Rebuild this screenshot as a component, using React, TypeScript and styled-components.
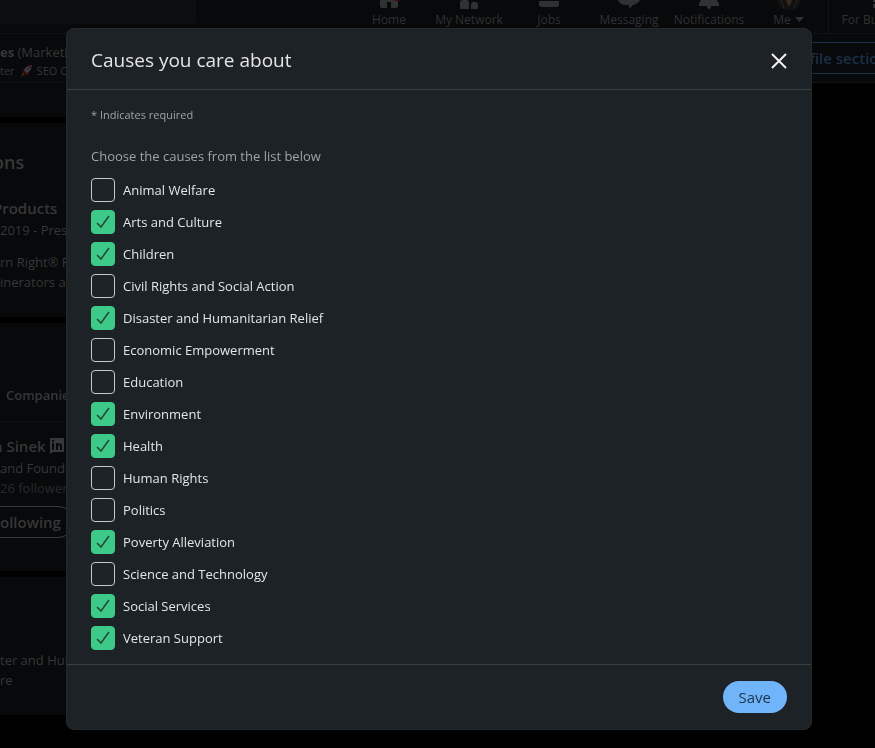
import React, { useState } from "react";
import styled, { createGlobalStyle } from "styled-components";

const Global = createGlobalStyle`
  * { box-sizing: border-box; }
  html { background: #000; overflow: hidden; }
  body { margin: 0; font-family: "Open Sans", "Noto Sans", sans-serif; color: #363738; }
  h1, h2, h3, p, ul, fieldset { margin: 0; padding: 0; border: 0; }
  svg { display: block; }
`;

const Page = styled.div`
  min-height: 100vh;
  background: #000;
`;

const Nav = styled.nav`
  display: flex;
  height: 34px;
  overflow: hidden;
  background: #07090a;
  border-bottom: 1px solid #101214;
`;

const SearchInput = styled.input`
  flex: 0 0 196px;
  height: 24px;
  margin-right: 153px;
  border: 0;
  border-radius: 0 0 4px 4px;
  background: #0b0f12;
  color: #363738;
`;

const NavLink = styled.a<{ $divided?: boolean }>`
  flex: 0 0 80px;
  display: flex;
  flex-direction: column;
  align-items: center;
  color: #303132;
  font-size: 12px;
  line-height: 16px;
  white-space: nowrap;
  text-decoration: none;
  border-right: ${(p) => (p.$divided ? "1px solid #101214" : "0")};
  svg { margin-bottom: 2px; }
`;

const BusinessLink = styled(NavLink)`
  flex-basis: 96px;
`;

const NavLabel = styled.span`
  display: flex;
  align-items: center;
  gap: 4px;
`;

const ProfileBar = styled.header`
  display: flex;
  justify-content: space-between;
  align-items: center;
  height: 49px;
  overflow: hidden;
  background: #07090a;
  border-bottom: 1px solid #101214;
`;

const ProfileSummary = styled.div`
  padding-top: 6px;
`;

const ProfileName = styled.p`
  font-size: 13px;
  line-height: 20px;
  white-space: nowrap;
`;

const Headline = styled.p`
  display: flex;
  align-items: center;
  gap: 5px;
  font-size: 11px;
  line-height: 18px;
  white-space: nowrap;
`;

const SectionButton = styled.button`
  flex: 0 0 auto;
  height: 32px;
  margin-right: -30px;
  padding: 0 16px;
  border: 1px solid #1b2f45;
  border-radius: 16px;
  background: transparent;
  color: #1b2f45;
  font: 600 15px "Open Sans", sans-serif;
`;

const Column = styled.main`
  display: grid;
  gap: 6px;
  width: 80%;
`;

const Card = styled.section<{ $height: number; $top?: number }>`
  min-height: ${(p) => p.$height}px;
  padding-top: ${(p) => p.$top ?? 0}px;
  background: #07090a;
  white-space: nowrap;
`;

const CardTitle = styled.h2`
  margin: 0 0 22px -7px;
  font-size: 18px;
  line-height: 24px;
  font-weight: 600;
`;

const ItemTitle = styled.h3`
  display: flex;
  align-items: center;
  gap: 4px;
  margin-left: -7px;
  font-size: 15px;
  line-height: 24px;
  font-weight: 600;
`;

const CardText = styled.p<{ $gap?: number; $faint?: boolean }>`
  margin-bottom: ${(p) => p.$gap ?? 0}px;
  color: ${(p) => (p.$faint ? "#292a2b" : "#363738")};
  font-size: 13px;
  line-height: 20px;
`;

const TabRow = styled.div`
  display: flex;
  height: 53px;
  margin-bottom: 12px;
  padding-left: 6px;
  border-bottom: 1px solid #101214;
`;

const Tab = styled.button`
  padding: 0;
  border: 0;
  background: transparent;
  color: #363738;
  font: 600 13px "Open Sans", sans-serif;
`;

const FollowButton = styled.button`
  height: 32px;
  margin-top: 8px;
  padding: 0 12px 0 0;
  border: 1px solid #363738;
  border-left: 0;
  border-radius: 0 16px 16px 0;
  background: transparent;
  color: #363738;
  font: 600 15px "Open Sans", sans-serif;
`;

const Overlay = styled.div`
  position: fixed;
  inset: 0;
  padding: 28px 63px 18px 66px;
`;

const Dialog = styled.form`
  display: flex;
  flex-direction: column;
  overflow: hidden;
  border: 1px solid #232a2d;
  border-radius: 8px;
  background: #1d2226;
  color: #e4e5e5;
`;

const DialogHeader = styled.header`
  display: flex;
  align-items: center;
  justify-content: space-between;
  height: 61px;
  padding: 0 20px 0 24px;
  border-bottom: 1px solid #3a3f42;
`;

const DialogTitle = styled.h1`
  padding-top: 2px;
  font-size: 19px;
  line-height: 28px;
  font-weight: 400;
`;

const CloseButton = styled.button`
  display: grid;
  place-items: center;
  width: 24px;
  height: 24px;
  margin-top: 4px;
  padding: 0;
  border: 0;
  background: transparent;
  color: #f2f2f2;
`;

const DialogBody = styled.div`
  padding: 17px 24px 14px;
`;

const Required = styled.p`
  margin-bottom: 23px;
  color: #a1a3a5;
  font-size: 11px;
  font-weight: 500;
  line-height: 16px;
`;

const Legend = styled.legend`
  margin-bottom: 12px;
  padding: 0;
  color: #a1a3a5;
  font-size: 13px;
  font-weight: 500;
  line-height: 20px;
`;

const CauseList = styled.ul`
  display: grid;
  gap: 8px;
  list-style: none;
`;

const CauseLabel = styled.label`
  display: inline-flex;
  align-items: center;
  gap: 8px;
  height: 24px;
  font-size: 13px;
  font-weight: 500;
  line-height: 20px;
  vertical-align: top;
`;

const CheckSlot = styled.span`
  display: grid;
  > * { grid-area: 1 / 1; }
  svg { pointer-events: none; }
`;

const Checkbox = styled.input`
  appearance: none;
  width: 24px;
  height: 24px;
  margin: 0;
  border: 1px solid #c7c9ca;
  border-radius: 4px;
  &:checked { border-color: #3dc987; background: #3dc987; }
`;

const DialogFooter = styled.footer`
  display: flex;
  justify-content: flex-end;
  padding: 16px 24px;
  border-top: 1px solid #3a3f42;
`;

const SaveButton = styled.button`
  height: 32px;
  padding: 0 16px;
  border: 0;
  border-radius: 16px;
  background: #70b5f9;
  color: #1d3347;
  font: 500 15px "Open Sans", sans-serif;
`;

const HomeIcon = () => (
  <svg width="24" height="10" fill="#303132"><path d="M3 0h18v6a2 2 0 0 1-2 2h-5V2h-4v6H5a2 2 0 0 1-2-2z" /><path d="M16 0h8q-4 2-8 0z" fill="#410c0a" /></svg>
);
const NetworkIcon = () => (
  <svg width="24" height="10" fill="#303132"><path d="M3 9V3a3 3 0 0 1 3-3h3a3 3 0 0 1 3 3v6zM14 9V5a3 3 0 0 1 2-3h3a3 3 0 0 1 2 3v4z" /></svg>
);
const JobsIcon = () => (
  <svg width="24" height="10" fill="#303132"><path d="M2 1h20v3a3 3 0 0 1-3 3H5a3 3 0 0 1-3-3z" /></svg>
);
const MessageIcon = () => (
  <svg width="24" height="10" fill="#303132"><path d="M1 0h22q-2 4-7 5l-4 4V5H9Q3 5 1 0z" /></svg>
);
const BellIcon = () => (
  <svg width="24" height="10" fill="#303132"><path d="M4 0h16l2 4v2h-8a2 3 0 0 1-4 0H2V4z" /></svg>
);
const Portrait = () => (
  <svg width="24" height="10"><path d="M0 0h24a12 11 0 0 1-24 0z" fill="#111112" /><path d="M9 0h6q-1 5-3 6-2-1-3-6z" fill="#35291f" /><path d="M4 0l3 8M20 0l-3 8" stroke="#292320" /></svg>
);
const GridIcon = () => (
  <svg width="24" height="10" fill="#303132"><path d="M8 0h4v2H8zM15 0h4v2h-4zM8 4h4v4H8zM15 4h4v4h-4z" /></svg>
);
const Caret = () => (
  <svg width="9" height="5" fill="#303132"><path d="M0 0h9L4.5 5z" /></svg>
);
const Rocket = () => (
  <svg width="12" height="12" viewBox="0 0 12 12">
    <path d="M2 5l3-1 4 4-2 3-1-2-3-3z" fill="#411014" />
    <path d="M12 0Q7 0 4 5l3 3q5-3 5-8z" fill="#3b3e43" />
    <path d="M12 0L8 1l3 3z" fill="#4a1218" />
    <circle cx="8" cy="4" r="1" fill="#14212e" />
    <path d="M3 7l2 2-4 3z" fill="#46270c" />
  </svg>
);
const LinkedInBadge = () => (
  <svg width="14" height="16" viewBox="0 0 14 16">
    <path fillRule="evenodd" d="M0 0h14v14H3l-3 2zM2 5v7h2V5zM2 2v2h2V2zM6 5v7h2V8q2-2 2 1v3h2V8q0-4-4-2V5z" fill="#363738" />
  </svg>
);
const CloseIcon = () => (
  <svg width="18" height="18" stroke="currentColor" strokeWidth="2"><path d="M2 2l14 14M16 2L2 16" /></svg>
);
const CheckIcon = () => (
  <svg width="24" height="24" fill="none" stroke="#1f4f3b" strokeWidth="1.6"><path d="M6 13l4 4 8-11" /></svg>
);

const causes: [string, boolean][] = [
  ["Animal Welfare", false],
  ["Arts and Culture", true],
  ["Children", true],
  ["Civil Rights and Social Action", false],
  ["Disaster and Humanitarian Relief", true],
  ["Economic Empowerment", false],
  ["Education", false],
  ["Environment", true],
  ["Health", true],
  ["Human Rights", false],
  ["Politics", false],
  ["Poverty Alleviation", true],
  ["Science and Technology", false],
  ["Social Services", true],
  ["Veteran Support", true],
];

const navItems = [
  { label: "Home", icon: <HomeIcon /> },
  { label: "My Network", icon: <NetworkIcon /> },
  { label: "Jobs", icon: <JobsIcon /> },
  { label: "Messaging", icon: <MessageIcon /> },
  { label: "Notifications", icon: <BellIcon /> },
];

function Cause({ name, initial }: { name: string; initial: boolean }) {
  const [checked, setChecked] = useState(initial);
  return (
    <CauseLabel>
      <CheckSlot>
        <Checkbox type="checkbox" checked={checked} onChange={(e) => setChecked(e.target.checked)} />
        {checked && <CheckIcon />}
      </CheckSlot>
      {name}
    </CauseLabel>
  );
}

export default function App() {
  return (
    <>
      <Global />
      <Page>
        <Nav>
          <SearchInput type="search" aria-label="Search" />
          {navItems.map((item) => (
            <NavLink href="#" key={item.label}>
              {item.icon}
              <NavLabel>{item.label}</NavLabel>
            </NavLink>
          ))}
          <NavLink href="#" $divided>
            <Portrait />
            <NavLabel>Me <Caret /></NavLabel>
          </NavLink>
          <BusinessLink href="#">
            <GridIcon />
            <NavLabel>For Business</NavLabel>
          </BusinessLink>
        </Nav>
        <ProfileBar>
          <ProfileSummary>
            <ProfileName><b>es</b> (Marketing)</ProfileName>
            <Headline>ter <Rocket /> SEO C</Headline>
          </ProfileSummary>
          <SectionButton type="button">Add profile section</SectionButton>
        </ProfileBar>
        <Column>
          <Card $height={34} />
          <Card $height={194} $top={27}>
            <CardTitle>ons</CardTitle>
            <ItemTitle>Products</ItemTitle>
            <CardText $gap={12}>2019 - Present</CardText>
            <CardText>rn Right® P</CardText>
            <CardText>inerators and</CardText>
          </Card>
          <Card $height={248} $top={46}>
            <TabRow><Tab type="button">Companies</Tab></TabRow>
            <ItemTitle>n Sinek <LinkedInBadge /></ItemTitle>
            <CardText>and Founder</CardText>
            <CardText $faint>26 followers</CardText>
            <FollowButton type="button">ollowing</FollowButton>
          </Card>
          <Card $height={138} $top={73}>
            <CardText>ter and Human</CardText>
            <CardText>re</CardText>
          </Card>
        </Column>
      </Page>
      <Overlay>
        <Dialog role="dialog" aria-modal="true" aria-labelledby="causes-title" onSubmit={(e) => e.preventDefault()}>
          <DialogHeader>
            <DialogTitle id="causes-title">Causes you care about</DialogTitle>
            <CloseButton type="button" aria-label="Dismiss"><CloseIcon /></CloseButton>
          </DialogHeader>
          <DialogBody>
            <Required>* Indicates required</Required>
            <fieldset>
              <Legend>Choose the causes from the list below</Legend>
              <CauseList>
                {causes.map(([name, initial]) => (
                  <li key={name}><Cause name={name} initial={initial} /></li>
                ))}
              </CauseList>
            </fieldset>
          </DialogBody>
          <DialogFooter>
            <SaveButton type="submit">Save</SaveButton>
          </DialogFooter>
        </Dialog>
      </Overlay>
    </>
  );
}
